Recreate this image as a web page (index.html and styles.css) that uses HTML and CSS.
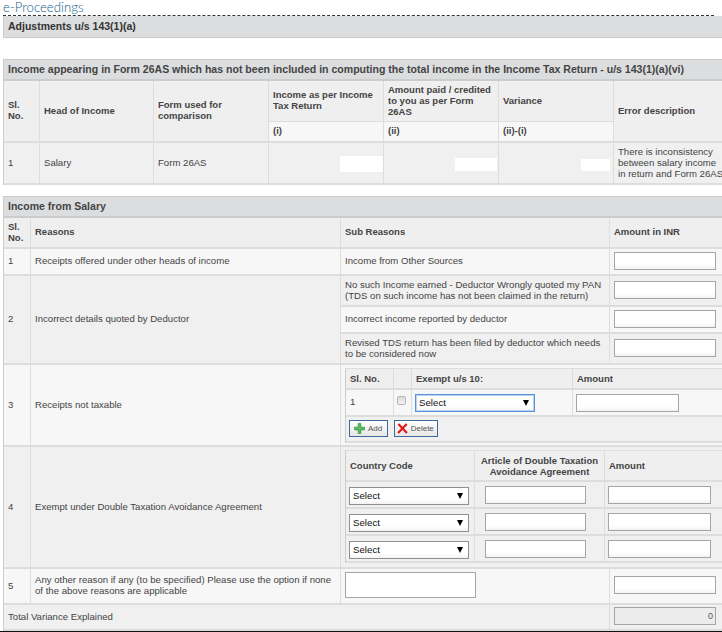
FILE: index.html
```html
<!DOCTYPE html>
<html lang="en">
<head>
<meta charset="utf-8">
<title>e-Proceedings</title>
<link rel="stylesheet" href="styles.css">
</head>
<body>
<div class="page">
  <h1 class="page-title">e-Proceedings</h1>
  <h2 class="section-bar">Adjustments u/s 143(1)(a)</h2>

  <table class="grid t1">
    <colgroup><col class="c36"><col class="c114"><col class="c115"><col class="c115"><col class="c115"><col class="c115"><col class="c111"></colgroup>
    <tr class="h22"><th colspan="7" class="bar">Income appearing in Form 26AS which has not been included in computing the total income in the Income Tax Return - u/s 143(1)(a)(vi)</th></tr>
    <tr class="h41 head">
      <th rowspan="2">Sl.<br>No.</th>
      <th rowspan="2">Head of Income</th>
      <th rowspan="2">Form used for<br>comparison</th>
      <th class="top">Income as per Income<br>Tax Return</th>
      <th>Amount paid / credited<br>to you as per Form<br>26AS</th>
      <th>Variance</th>
      <th rowspan="2">Error description</th>
    </tr>
    <tr class="h21 sub"><th>(i)</th><th>(ii)</th><th>(ii)-(i)</th></tr>
    <tr class="h42 even">
      <td>1</td><td>Salary</td><td>Form 26AS</td>
      <td class="redact"><span class="mask m1"></span></td>
      <td class="redact"><span class="mask m2"></span></td>
      <td class="redact"><span class="mask m3"></span></td>
      <td class="wrap">There is inconsistency<br>between salary income<br>in return and Form 26AS</td>
    </tr>
  </table>

  <table class="grid t2">
    <colgroup><col class="c27"><col class="c310"><col class="c269"><col class="c115"></colgroup>
    <tr class="h22"><th colspan="4" class="bar">Income from Salary</th></tr>
    <tr class="h31 head"><th>Sl.<br>No.</th><th>Reasons</th><th>Sub Reasons</th><th>Amount in INR</th></tr>
    <tr class="h27 odd"><td>1</td><td>Receipts offered under other heads of income</td><td>Income from Other Sources</td><td><input class="field amt"></td></tr>
    <tr class="h31 even"><td rowspan="3">2</td><td rowspan="3">Incorrect details quoted by Deductor</td><td>No such Income earned - Deductor Wrongly quoted my PAN<br>(TDS on such income has not been claimed in the return)</td><td><input class="field amt"></td></tr>
    <tr class="h27 odd alt"><td>Incorrect income reported by deductor</td><td><input class="field amt"></td></tr>
    <tr class="h31 even"><td>Revised TDS return has been filed by deductor which needs<br>to be considered now</td><td><input class="field amt"></td></tr>
    <tr class="odd h82">
      <td>3</td><td>Receipts not taxable</td>
      <td colspan="2" class="nest">
        <table class="grid inner i1">
          <colgroup><col class="c48"><col class="c18"><col class="c161"><col class="c153"></colgroup>
          <tr class="h21 head"><th>Sl. No.</th><th></th><th>Exempt u/s 10:</th><th>Amount</th></tr>
          <tr class="h27 odd">
            <td class="num1">1</td>
            <td class="check"><input type="checkbox" class="box"></td>
            <td class="pick"><span class="select-wrap w120"><select class="select focus"><option>Select</option></select></span></td>
            <td class="pick"><input class="field w103"></td>
          </tr>
          <tr class="h25 even"><td colspan="4" class="actions">
            <button class="btn btn-add" type="button"><svg class="ic" viewBox="0 0 12 12"><path d="M4.5 0.5h3v4h4v3h-4v4h-3v-4h-4v-3h4z" fill="#57bb5f" stroke="#2f8f3d" stroke-width="0.7"/></svg>Add</button>
            <button class="btn btn-del" type="button"><svg class="ic" viewBox="0 0 12 12"><path d="M1.5 1.2L10.8 11M10.6 1L1.2 11" stroke="#e01b1b" stroke-width="2.4" fill="none"/></svg>Delete</button>
          </td></tr>
        </table>
      </td>
    </tr>
    <tr class="even h122">
      <td>4</td><td>Exempt under Double Taxation Avoidance Agreement</td>
      <td colspan="2" class="nest n4">
        <table class="grid inner i2">
          <colgroup><col class="c129"><col class="c130"><col class="c121"></colgroup>
          <tr class="h31 head"><th>Country Code</th><th class="center">Article of Double Taxation<br>Avoidance Agreement</th><th>Amount</th></tr>
          <tr class="h27 odd"><td class="pick"><span class="select-wrap w120"><select class="select"><option>Select</option></select></span></td><td class="art"><input class="field w101"></td><td class="art3"><input class="field w103"></td></tr>
          <tr class="h27 even"><td class="pick"><span class="select-wrap w120"><select class="select"><option>Select</option></select></span></td><td class="art"><input class="field w101"></td><td class="art3"><input class="field w103"></td></tr>
          <tr class="h27 odd"><td class="pick"><span class="select-wrap w120"><select class="select"><option>Select</option></select></span></td><td class="art"><input class="field w101"></td><td class="art3"><input class="field w103"></td></tr>
        </table>
      </td>
    </tr>
    <tr class="odd h36">
      <td>5</td>
      <td>Any other reason if any (to be specified) Please use the option if none<br>of the above reasons are applicable</td>
      <td><textarea class="note"></textarea></td>
      <td><input class="field amt"></td>
    </tr>
    <tr class="even h26 last">
      <td colspan="3">Total Variance Explained</td>
      <td><input class="field amt off" value="0" disabled></td>
    </tr>
  </table>
</div>
<div class="edge"></div>
</body>
</html>
```

FILE: styles.css
```css
html, body { margin: 0; padding: 0; background: #fff; }
body { width: 722px; height: 632px; overflow: hidden; position: relative; font-family: "Liberation Sans", Arial, sans-serif; font-size: 9.6px; line-height: 11px; color: #444; }
.page { padding-left: 3px; width: 730px; }

.page-title { margin: 0; width: 711px; height: 16px; font-family: Lato, "Open Sans", sans-serif; font-weight: 300; font-size: 13.2px; line-height: 15px; color: #14608a; border-bottom: 1px dashed #333; box-sizing: border-box; }
.section-bar { margin: 0 0 21px; height: 22px; box-sizing: border-box; width: 722px; background: #dcddde; border-left: 1px solid #ccc; border-bottom: 1px solid #c8c8c8; padding-left: 4px; font-size: 10.5px; line-height: 21px; font-weight: bold; color: #333; }

.grid { border-collapse: separate; border-spacing: 0; table-layout: fixed; }
.t1 { width: 723px; border-left: 1px solid #ccc; margin-bottom: 11px; }
.t2 { width: 722px; border-left: 1px solid #ccc; }
.grid th, .grid td { padding: 0 4px 2px; box-sizing: border-box; text-align: left; vertical-align: middle; border-right: 1px solid #ddd; border-bottom: 2px solid #ddd; font-weight: normal; overflow: hidden; }
.grid th { font-weight: bold; color: #444; font-size: 9.5px; }
.grid th.bar { padding-bottom: 0; background: #dcddde; border-top: 1px solid #ccc; border-right: 0; border-bottom: 2px solid #ccc; font-size: 10.55px; font-weight: bold; color: #444; white-space: nowrap; }
.head th { background: #efefef; }
.sub th { background: #f7f7f7; }
.t1 .h41 th:not([rowspan]) { border-bottom-width: 1px; }
.odd td { background: #f7f7f7; }
.even td { background: #f0f0f0; }
.grid th.top { vertical-align: top; padding-top: 8px; }
.grid th.center { text-align: center; }

.c27 { width: 27px; } .c36 { width: 36px; } .c48 { width: 48px; } .c18 { width: 18px; }
.c114 { width: 114px; } .c115 { width: 115px; } .c111 { width: 112px; }
.c310 { width: 310px; } .c269 { width: 269px; } .c161 { width: 161px; } .c153 { width: 153px; }
.c129 { width: 129px; } .c130 { width: 130px; } .c121 { width: 121px; }

.h21 { height: 21px; } .h22 { height: 22px; } .h25 { height: 26px; } .h26 { height: 26px; } .h27 { height: 27px; }
.h31 { height: 31px; } .h36 { height: 36px; } .h41 { height: 41px; } .h42 { height: 42px; } .h82 { height: 82px; } .h122 { height: 122px; }

.wrap { white-space: nowrap; }
.grid td.redact { padding: 0; vertical-align: top; }
.mask { display: block; margin-left: auto; background: #fff; }
.m1 { width: 43px; height: 16px; margin-top: 13px; }
.m2 { width: 42px; height: 13px; margin-top: 15px; margin-right: 1px; }
.m3 { width: 29px; height: 12px; margin-top: 16px; margin-right: 3px; }

.field { display: block; box-sizing: border-box; height: 18px; margin: 0; padding: 0 2px; border: 1px solid #a5a5a5; background: linear-gradient(#fff 70%, #f3f3f3); font: 9px "Liberation Sans", Arial, sans-serif; color: #555; border-radius: 0; }
.amt { width: 102px; }
.off { background: #ececec; text-align: right; }
.w103 { width: 103px; }
.w101 { width: 101px; }

.grid td.nest { padding: 0 0 0 4px; vertical-align: top; overflow: visible; border-right: 0; }
.inner { margin-top: 3px; border-left: 1px solid #ccc; border-top: 1px solid #ddd; }
.i1 { width: 381px; }
.i2 { width: 381px; margin-top: 3px; }
.grid.inner td { padding: 0 4px 2px; }
.grid.inner th { padding: 0 4px; }
.inner .h25 td { height: 26px; }

.check { text-align: center; }
.grid.inner td.check { padding: 0 0 5px 2px; }
.box { display: block; width: 9px; height: 9px; margin: 0 0 0 1px; appearance: none; -webkit-appearance: none; border: 1px solid #b5b5b5; border-radius: 2px; background: linear-gradient(#dcdcdc, #f2f2f2); }
.grid.inner td.pick { padding: 0 0 0 3px; }
.grid.i2 td.pick { padding-top: 2px; }
.grid.inner td.art { padding: 0 0 0 10px; }
.grid.inner td.art3 { padding: 0 0 0 3px; }
.select-wrap { display: block; position: relative; height: 18px; }
.w120 { width: 120px; }
.select-wrap::after { content: ""; position: absolute; right: 6px; top: 6px; border-left: 3px solid transparent; border-right: 3px solid transparent; border-top: 6px solid #000; }
.select { display: block; width: 100%; height: 18px; box-sizing: border-box; margin: 0; padding: 0 0 0 3px; border: 1px solid #8f8f8f; border-radius: 0; appearance: none; -webkit-appearance: none; background: linear-gradient(#fff 70%, #f3f3f3); font: 9.7px "Liberation Sans", Arial, sans-serif; color: #111; }
.focus { border-color: #5b93d6; box-shadow: 0 0 0 1px #b9d2f0 inset; }

.grid.inner td.actions { padding: 3px 0 0 3px; vertical-align: top; }
.btn { display: inline-flex; align-items: center; gap: 3px; box-sizing: border-box; height: 17px; padding: 0; margin: 0 3px 0 0; vertical-align: top; background: linear-gradient(#fff, #e6e6e6); border: 1px solid #3d6a9a; border-radius: 0; font: 8px "Liberation Sans", Arial, sans-serif; color: #555; }
.btn-add { width: 39px; padding-left: 4px; }
.btn-del { width: 44px; padding-left: 2px; }
.ic { width: 11px; height: 11px; flex: none; }

.note { display: block; box-sizing: border-box; width: 131px; height: 26px; margin: 0; padding: 0; border: 1px solid #a5a5a5; background: #fff; resize: none; }

.edge { position: absolute; left: 0; bottom: 0; width: 722px; height: 1px; background: #111; }
```
